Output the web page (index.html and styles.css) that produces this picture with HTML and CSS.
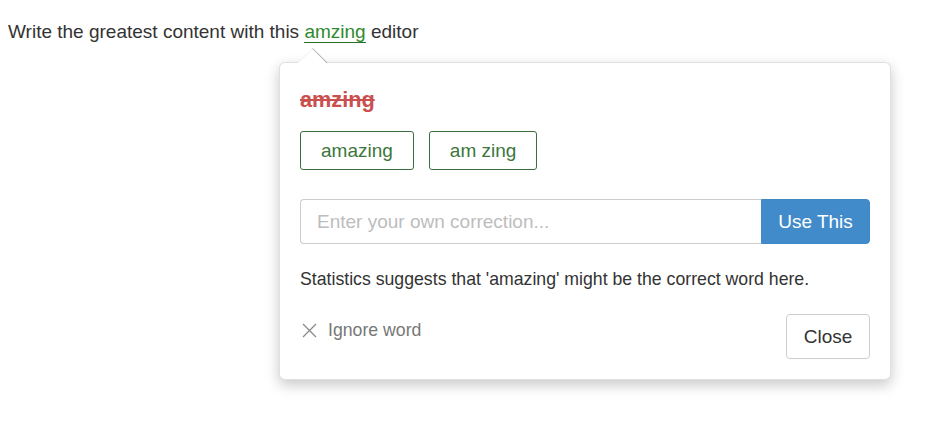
FILE: index.html
```html
<!DOCTYPE html>
<html>
<head>
<meta charset="utf-8">
<link rel="stylesheet" href="styles.css">
</head>
<body>
<p class="line">Write the greatest content with this <span class="misspelt">amzing</span> editor</p>
<div class="popover">
  <div class="arrow"></div>
  <div class="word">amzing</div>
  <div class="suggestions">
    <button class="sugg">amazing</button>
    <button class="sugg">am zing</button>
  </div>
  <div class="custom">
    <input class="custom-input" type="text" placeholder="Enter your own correction...">
    <button class="use">Use This</button>
  </div>
  <p class="stats">Statistics suggests that 'amazing' might be the correct word here.</p>
  <div class="footer">
    <span class="ignore"><svg class="x" width="15" height="15" viewBox="0 0 15 15"><path d="M1 1L14 14M14 1L1 14" stroke="#8a8a8a" stroke-width="1.3" fill="none"/></svg>Ignore word</span>
    <button class="close">Close</button>
  </div>
</div>
</body>
</html>
```
FILE: styles.css
```css
html, body {
  margin: 0;
  padding: 0;
  background: #fff;
}
body {
  font-family: "Liberation Sans", Arial, sans-serif;
  color: #333;
  padding: 8px;
}
.line {
  margin: 11px 0 0 0;
  font-size: 19px;
  line-height: 26px;
}
.misspelt {
  color: #2f8a2f;
  border-bottom: 1px solid #2a6e2a;
}
.popover {
  position: absolute;
  left: 279px;
  top: 62px;
  width: 570px;
  padding: 24px 20px 20px 20px;
  background: #fff;
  border: 1px solid rgba(0,0,0,0.12);
  border-radius: 6px;
  box-shadow: 0 5px 14px rgba(0,0,0,0.22);
}
.arrow {
  position: absolute;
  box-sizing: border-box;
  left: 22px;
  top: -11px;
  width: 21px;
  height: 21px;
  background: #fff;
  border-top: 1px solid rgba(0,0,0,0.3);
  border-left: 1px solid rgba(0,0,0,0.06);
  transform: rotate(45deg);
}
.word {
  font-size: 21.7px;
  font-weight: bold;
  line-height: 26px;
  color: #c9504e;
  text-decoration: line-through;
}
.suggestions {
  display: flex;
  gap: 15px;
  margin-top: 18px;
}
.sugg {
  font-family: inherit;
  font-size: 19px;
  color: #3c763d;
  background: #fff;
  border: 1px solid #3c6e3d;
  border-radius: 3px;
  height: 39px;
  padding: 0 20px;
}
.custom {
  display: flex;
  margin-top: 29px;
  height: 45px;
}
.custom-input {
  flex: 1;
  font-family: inherit;
  font-size: 19px;
  color: #333;
  border: 1px solid #ccc;
  border-right: none;
  border-radius: 4px 0 0 4px;
  padding: 0 16px;
  outline: none;
  min-width: 0;
}
.custom-input::placeholder {
  color: #bdbdbd;
}
.use {
  width: 109px;
  font-family: inherit;
  font-size: 19px;
  color: #fff;
  background: #428bca;
  border: 1px solid #3f87c5;
  border-radius: 0 4px 4px 0;
  padding: 0;
}
.stats {
  margin: 23px 0 0 0;
  font-size: 17.7px;
  line-height: 24px;
}
.footer {
  display: flex;
  justify-content: space-between;
  align-items: flex-start;
  margin-top: 23px;
}
.ignore {
  display: flex;
  align-items: center;
  gap: 11px;
  font-size: 17.7px;
  line-height: 24px;
  color: #777;
  margin-top: 4px;
  padding-left: 2px;
}
.close {
  font-family: inherit;
  font-size: 19px;
  color: #333;
  background: #fff;
  border: 1px solid #ccc;
  border-radius: 4px;
  height: 45px;
  width: 84px;
  padding: 0;
}
```
